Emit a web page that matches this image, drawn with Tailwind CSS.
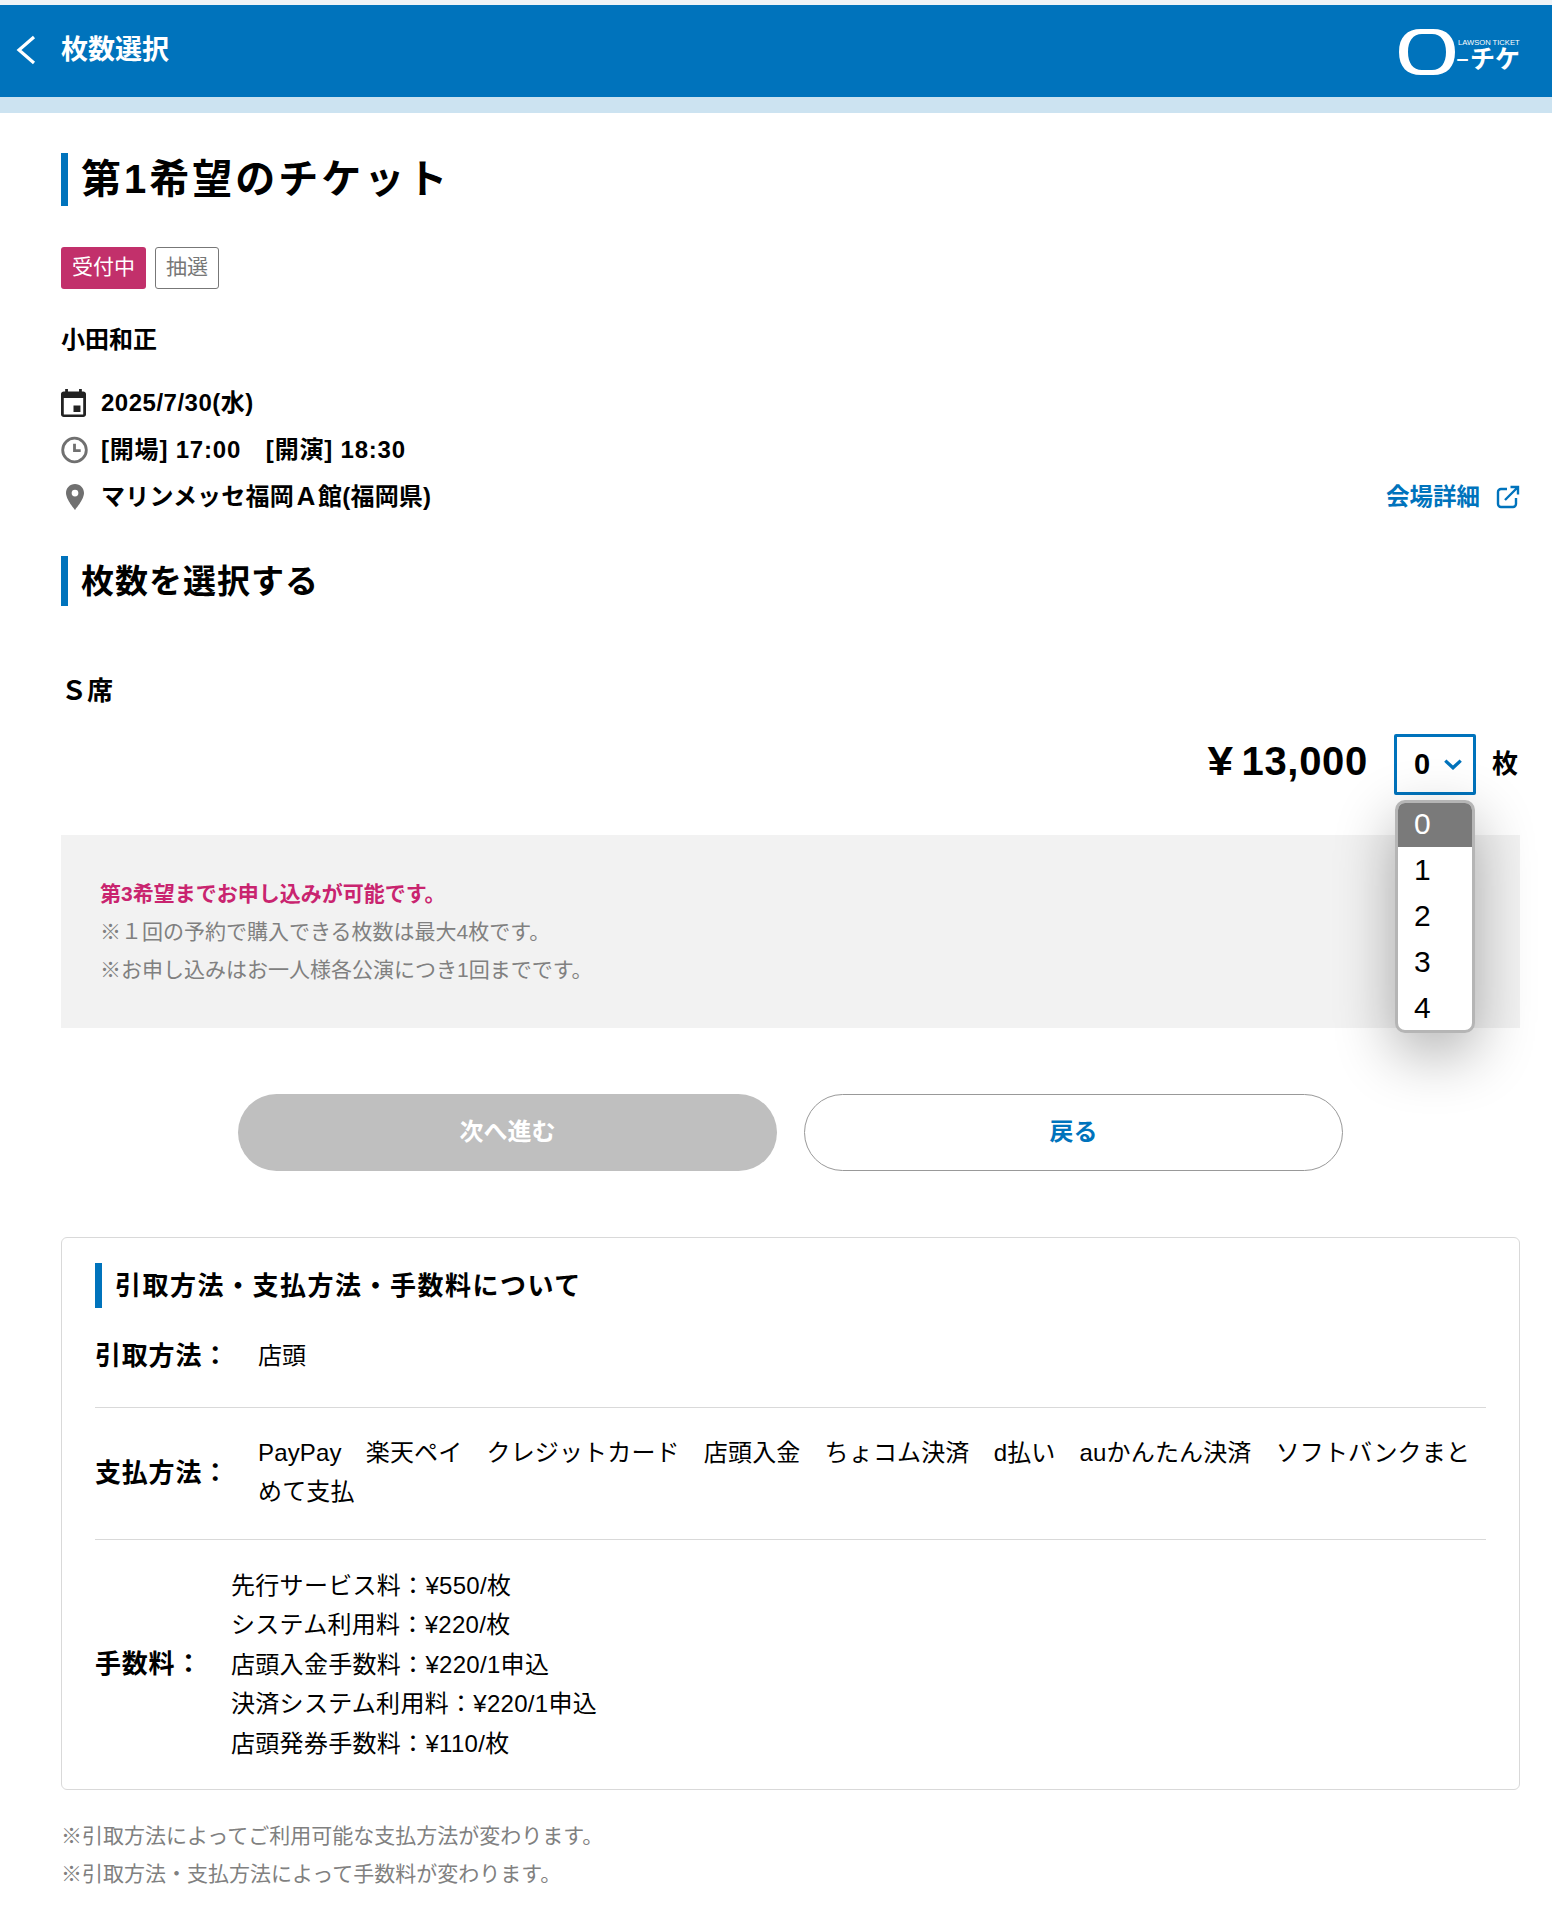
<!DOCTYPE html>
<html lang="ja">
<head>
  <meta charset="UTF-8">
  <title>枚数選択</title>
  <script src="https://cdn.jsdelivr.net/npm/@tailwindcss/browser@4"></script>
</head>
<body class="bg-white text-black font-['Liberation_Sans','Noto_Sans_CJK_JP',sans-serif]">
  <div class="h-[5px] bg-[#eef3f7]"></div>

  <!-- header -->
  <header class="h-[92px] bg-[#0073bc] flex items-center justify-between pl-[16px] pr-[32px]">
    <div class="flex items-center gap-[25px] -mt-[2px]">
      <svg width="20" height="30" viewBox="0 0 20 30" fill="none" stroke="white" stroke-width="3.2"><path d="M18 2 L3 15 L18 28"/></svg>
      <span class="text-white font-bold text-[27px] leading-none">枚数選択</span>
    </div>
    <div class="relative w-[121px] h-[46px] mt-[2px]">
      <svg class="absolute left-0 top-0" width="56" height="46" viewBox="0 0 56 46"><path fill="white" fill-rule="evenodd" d="M22 0h12c14 0 22 8 22 23s-8 23-22 23H22C8 46 0 38 0 23S8 0 22 0zm1 5C14 5 9 12 9 23s5 18 14 18h10c9 0 14-7 14-18S42 5 33 5z"/></svg>
      <span class="absolute left-[59px] top-[10px] text-white text-[7.6px] leading-none whitespace-nowrap">LAWSON TICKET</span>
      <span class="absolute left-[57px] top-[25px] text-white font-bold text-[13px] leading-none">ー</span>
      <span class="absolute left-[71px] top-[18px] text-white font-bold text-[25px] leading-none whitespace-nowrap">チケ</span>
    </div>
  </header>
  <div class="h-[16px] bg-[#cce3f1]"></div>

  <main class="pl-[61px] pr-[32px] pt-[40px] relative">
    <h1 class="border-l-[7px] border-[#0073bc] pl-[13px] h-[53px] pb-[2px] flex items-center font-bold text-[40px] tracking-[3px] leading-none">第1希望のチケット</h1>

    <div class="mt-[41px] flex gap-[9px]">
      <span class="h-[42px] w-[85px] pb-[2px] rounded-[3px] bg-[#c2306b] text-white text-[21px] flex items-center justify-center">受付中</span>
      <span class="h-[42px] w-[64px] pb-[2px] rounded-[3px] border border-[#777] text-[#777] text-[21px] flex items-center justify-center">抽選</span>
    </div>

    <p class="mt-[37px] font-bold text-[24px] leading-[28px]">小田和正</p>

    <div class="mt-[35px] flex flex-col gap-[19px] font-bold text-[24px] leading-[28px]">
      <div class="flex items-center gap-[15px]">
        <svg width="25" height="28" viewBox="3 1 18 22" preserveAspectRatio="none" fill="#222"><path d="M19 3h-1V1h-2v2H8V1H6v2H5c-1.100 0-2 .9-2 2v16c0 1.100.9 2 2 2h14c1.100 0 2-.9 2-2V5c0-1.100-.9-2-2-2zm0 18H5V8h14v13zm-2-7h-5v5h5v-5z"/></svg>
        <span class="tracking-[0.5px]">2025/7/30(水)</span>
      </div>
      <div class="flex items-center gap-[13px]">
        <svg width="27" height="28" viewBox="0 0 24 24" fill="none" stroke="#707070" stroke-width="2.500"><circle cx="12" cy="12" r="10.500"/><path d="M12 6.500v6h5.500"/></svg>
        <span class="tracking-[0.8px]">[開場] 17:00　[開演] 18:30</span>
      </div>
      <div class="flex items-center justify-between">
        <div class="flex items-center gap-[13px]">
          <svg class="mx-[4.5px]" width="18" height="28" viewBox="4.500 1.500 15 21.500" fill="#707070"><path d="M12 1.500C7.600 1.500 4.500 4.900 4.500 9c0 5.500 7.500 14 7.500 14s7.500-8.500 7.500-14c0-4.100-3.100-7.500-7.500-7.500zm0 10.300a2.800 2.800 0 1 1 0-5.600 2.800 2.800 0 0 1 0 5.600z"/></svg>
          <span class="tracking-[0.2px]">マリンメッセ福岡Ａ館(福岡県)</span>
        </div>
        <a class="flex items-center gap-[16px] text-[#0073bc] text-[23.5px] font-bold">
          会場詳細
          <svg width="24" height="24" viewBox="0 0 24 24" fill="none" stroke="#0073bc" stroke-width="2.400"><path d="M11 4H5a3 3 0 0 0-3 3v12a3 3 0 0 0 3 3h12a3 3 0 0 0 3-3v-6"/><path d="M9 15 22 2M14.500 2H22v7.500"/></svg>
        </a>
      </div>
    </div>

    <h2 class="mt-[45px] border-l-[7px] border-[#0073bc] pl-[13px] h-[50px] flex items-center font-bold text-[33px] tracking-[1px] leading-none">枚数を選択する</h2>

    <p class="mt-[69px] font-bold text-[26px] leading-[32px]">Ｓ席</p>

    <div class="mt-[27px] flex items-center justify-end">
      <span class="font-bold text-[40px] leading-none tracking-[0.7px] -mt-[7px]"><span class="inline-block scale-x-[1.15] origin-right">¥</span><span class="ml-[8px]">13,000</span></span>
      <div class="ml-[26px] w-[82px] h-[61px] border-[3px] border-[#0073bc] rounded-[2px] flex items-center pl-[17px] gap-[14px] font-bold text-[29px]">
        <span>0</span>
        <svg width="18" height="11" viewBox="0 0 16 10" fill="none" stroke="#0073bc" stroke-width="3"><path d="M1 1.500 8 8l7-6.500"/></svg>
      </div>
      <span class="ml-[16px] w-[28px] font-bold text-[26px]">枚</span>
    </div>

    <div class="mt-[40px] bg-[#f2f2f2] h-[193px] pl-[39px] pt-[40px] text-[21px] leading-[38px] text-[#808080]">
      <p class="font-bold text-[#c9246f]">第3希望までお申し込みが可能です。</p>
      <p>※１回の予約で購入できる枚数は最大4枚です。</p>
      <p>※お申し込みはお一人様各公演につき1回までです。</p>
    </div>

    <!-- open select list -->
    <ul class="absolute left-[1395px] top-[687px] w-[80px] h-[233px] bg-white border-[3px] border-[#b5b5b5] rounded-[10px] overflow-hidden text-[30px] shadow-[0_20px_60px_rgba(0,0,0,0.32)]">
      <li class="h-[44px] pb-[3px] flex items-center pl-[16px] bg-[#7a7a7a] text-white">0</li>
      <li class="h-[46px] pb-[2px] flex items-center pl-[16px]">1</li>
      <li class="h-[46px] pb-[2px] flex items-center pl-[16px]">2</li>
      <li class="h-[46px] pb-[2px] flex items-center pl-[16px]">3</li>
      <li class="h-[46px] pb-[2px] flex items-center pl-[16px]">4</li>
    </ul>

    <div class="mt-[66px] flex gap-[27px] pl-[177px]">
      <button class="w-[539px] h-[77px] pb-[2px] rounded-full bg-[#bfbfbf] text-white font-bold text-[24px]">次へ進む</button>
      <button class="w-[539px] h-[77px] pb-[2px] rounded-full border border-[#999] text-[#0073bc] font-bold text-[24px]">戻る</button>
    </div>

    <section class="mt-[66px] h-[553px] border border-[#d9d9d9] rounded-[6px] px-[33px] pt-[25px]">
      <h3 class="border-l-[7px] border-[#0073bc] pl-[13px] h-[45px] flex items-center font-bold text-[26px] tracking-[1.5px] leading-none">引取方法・支払方法・手数料について</h3>
      <div class="h-[100px] flex items-center border-b border-[#d9d9d9] pb-[3px]">
        <span class="w-[163px] font-bold text-[26px] tracking-[0.8px]">引取方法：</span>
        <span class="text-[24px]">店頭</span>
      </div>
      <div class="h-[132px] flex items-center border-b border-[#d9d9d9]">
        <span class="w-[163px] shrink-0 font-bold text-[26px] tracking-[0.8px]">支払方法：</span>
        <span class="-mt-[3px] text-[24px] leading-[39px] tracking-[0.15px]">PayPay　楽天ペイ　クレジットカード　店頭入金　ちょコム決済　d払い　auかんたん決済　ソフトバンクまとめて支払</span>
      </div>
      <div class="h-[249px] flex items-center">
        <span class="w-[136px] shrink-0 font-bold text-[26px] tracking-[0.8px]">手数料：</span>
        <div class="text-[24px] leading-[39.500px] tracking-[0.3px]">
          <p>先行サービス料：¥550/枚</p>
          <p>システム利用料：¥220/枚</p>
          <p>店頭入金手数料：¥220/1申込</p>
          <p>決済システム利用料：¥220/1申込</p>
          <p>店頭発券手数料：¥110/枚</p>
        </div>
      </div>
    </section>

    <div class="mt-[27px] text-[21px] leading-[38px] text-[#808080]">
      <p>※引取方法によってご利用可能な支払方法が変わります。</p>
      <p>※引取方法・支払方法によって手数料が変わります。</p>
    </div>
  </main>
</body>
</html>
